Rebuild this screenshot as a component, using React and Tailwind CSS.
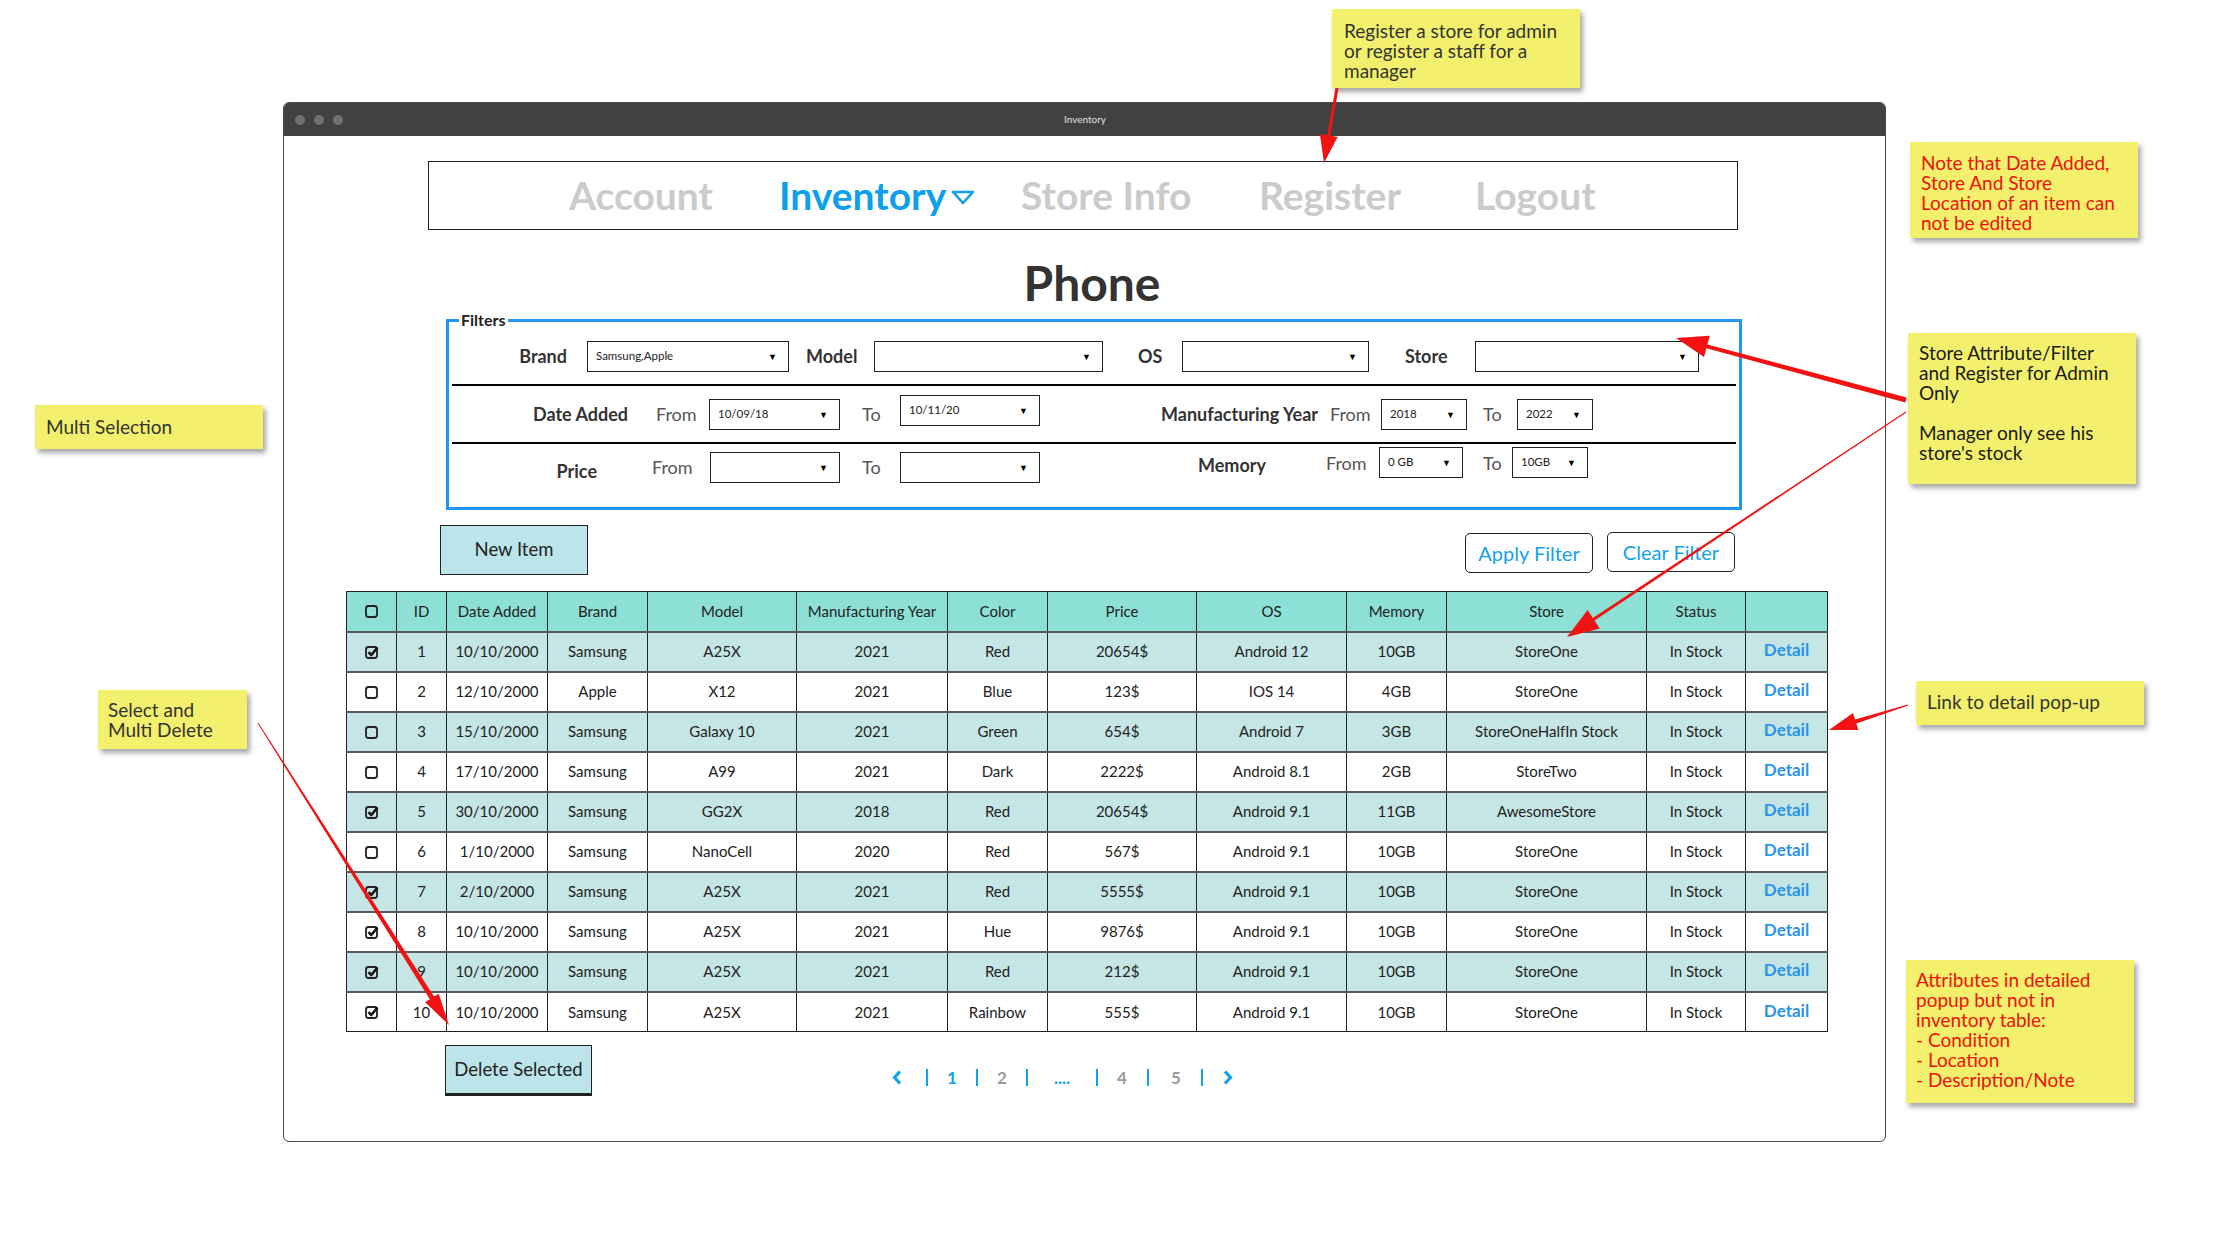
import clsx from 'clsx';

// wireframe data
const rows = [
  { id: 1, date: '10/10/2000', brand: 'Samsung', model: 'A25X', year: '2021', color: 'Red', price: '20654$', os: 'Android 12', mem: '10GB', store: 'StoreOne', checked: true },
  { id: 2, date: '12/10/2000', brand: 'Apple', model: 'X12', year: '2021', color: 'Blue', price: '123$', os: 'IOS 14', mem: '4GB', store: 'StoreOne', checked: false },
  { id: 3, date: '15/10/2000', brand: 'Samsung', model: 'Galaxy 10', year: '2021', color: 'Green', price: '654$', os: 'Android 7', mem: '3GB', store: 'StoreOneHalfIn Stock', checked: false },
  { id: 4, date: '17/10/2000', brand: 'Samsung', model: 'A99', year: '2021', color: 'Dark', price: '2222$', os: 'Android 8.1', mem: '2GB', store: 'StoreTwo', checked: false },
  { id: 5, date: '30/10/2000', brand: 'Samsung', model: 'GG2X', year: '2018', color: 'Red', price: '20654$', os: 'Android 9.1', mem: '11GB', store: 'AwesomeStore', checked: true },
  { id: 6, date: '1/10/2000', brand: 'Samsung', model: 'NanoCell', year: '2020', color: 'Red', price: '567$', os: 'Android 9.1', mem: '10GB', store: 'StoreOne', checked: false },
  { id: 7, date: '2/10/2000', brand: 'Samsung', model: 'A25X', year: '2021', color: 'Red', price: '5555$', os: 'Android 9.1', mem: '10GB', store: 'StoreOne', checked: true },
  { id: 8, date: '10/10/2000', brand: 'Samsung', model: 'A25X', year: '2021', color: 'Hue', price: '9876$', os: 'Android 9.1', mem: '10GB', store: 'StoreOne', checked: true },
  { id: 9, date: '10/10/2000', brand: 'Samsung', model: 'A25X', year: '2021', color: 'Red', price: '212$', os: 'Android 9.1', mem: '10GB', store: 'StoreOne', checked: true },
  { id: 10, date: '10/10/2000', brand: 'Samsung', model: 'A25X', year: '2021', color: 'Rainbow', price: '555$', os: 'Android 9.1', mem: '10GB', store: 'StoreOne', checked: true },
];

const headers = ['ID', 'Date Added', 'Brand', 'Model', 'Manufacturing Year', 'Color', 'Price', 'OS', 'Memory', 'Store', 'Status', ''];
const colWidths = ['w-[50px]', 'w-[50px]', 'w-[101px]', 'w-[100px]', 'w-[149px]', 'w-[151px]', 'w-[100px]', 'w-[149px]', 'w-[150px]', 'w-[100px]', 'w-[200px]', 'w-[99px]', 'w-[82px]'];

const Check = ({ on }) => (
  <svg width="16" height="16" viewBox="0 0 16 16" className="mx-auto block">
    <rect x="2" y="3" width="11" height="11" rx="2.5" fill="none" stroke="#222" strokeWidth="1.8" />
    {on && <path d="M4.5 8.2 L7.3 11 L13.5 3.5" fill="none" stroke="#111" strokeWidth="2.6" strokeLinejoin="round" />}
  </svg>
);

const Select = ({ className, value }) => (
  <div className={clsx('flex h-[31px] items-center justify-between border-[1.5px] border-[#222] bg-white pl-[8px] pr-[11px]', className)}>
    <span className="text-[11.5px] text-[#222]">{value}</span>
    <span className="text-[9px] leading-none text-black">▼</span>
  </div>
);

const Note = ({ className, children }) => (
  <div className={clsx('absolute bg-[#F2F06C] text-[19px] leading-[20px] shadow-[3px_4px_5px_rgba(0,0,0,0.35)]', className)}>
    {children}
  </div>
);

// tapered annotation arrow, geometry from endpoints
const arrow = (x1, y1, x2, y2, w1, w2, L, H) => {
  const dx = x2 - x1, dy = y2 - y1;
  const len = Math.hypot(dx, dy);
  const ux = dx / len, uy = dy / len, nx = -uy, ny = ux;
  const bx = x2 - ux * L, by = y2 - uy * L;
  const p = [
    [x1 + nx * w1 / 2, y1 + ny * w1 / 2],
    [bx + nx * w2 / 2, by + ny * w2 / 2],
    [bx + nx * H, by + ny * H],
    [x2, y2],
    [bx - nx * H, by - ny * H],
    [bx - nx * w2 / 2, by - ny * w2 / 2],
    [x1 - nx * w1 / 2, y1 - ny * w1 / 2],
  ];
  return p.map(([a, b]) => `${a.toFixed(1)},${b.toFixed(1)}`).join(' ');
};

const Chevron = ({ left }) => (
  <svg width="10" height="15" viewBox="0 0 10 15">
    <path d={left ? 'M8 1.5 L2.5 7.5 L8 13.5' : 'M2 1.5 L7.5 7.5 L2 13.5'} fill="none" stroke="#10A2EC" strokeWidth="3.2" />
  </svg>
);

const Bar = ({ className }) => (
  <div className={clsx('flex justify-center', className)}>
    <div className="h-[17px] w-[2px] bg-[#10A2EC]" />
  </div>
);

export default function App() {
  return (
    <div className="relative h-[1252px] w-[2219px] overflow-hidden bg-white pl-[283px] pt-[102px] font-[Lato,sans-serif] text-[#222]">
      {/* browser window */}
      <div className="flex h-[1040px] w-[1603px] flex-col overflow-hidden rounded-[6px] border-[1.5px] border-[#4a4a4a] bg-white">
        <div className="relative flex h-[33px] shrink-0 items-center bg-[#414141] pl-[11px]">
          <div className="flex gap-[9px]">
            <span className="h-[10px] w-[10px] rounded-full bg-[#6f6f6f]" />
            <span className="h-[10px] w-[10px] rounded-full bg-[#6f6f6f]" />
            <span className="h-[10px] w-[10px] rounded-full bg-[#6f6f6f]" />
          </div>
          <span className="flex-1 pr-[58px] text-center text-[10px] text-[#e0e0e0]">Inventory</span>
        </div>

        {/* nav */}
        <div className="ml-[144px] mt-[25px] flex h-[69px] w-[1310px] items-center border-[1.5px] border-[#222] pl-[140px] text-[39px] font-bold">
          <span className="w-[210px] text-[#CBCBCB]">Account</span>
          <span className="flex w-[242px] items-center text-[#0EA0EA]">
            Inventory
            <svg width="24" height="16" viewBox="0 0 24 16" className="ml-[5px] mt-[4px]">
              <path d="M2 2 L22 2 L12 13 Z" fill="none" stroke="#0EA0EA" strokeWidth="2.6" strokeLinejoin="round" />
            </svg>
          </span>
          <span className="w-[238px] text-[#CBCBCB]">Store Info</span>
          <span className="w-[216px] text-[#CBCBCB]">Register</span>
          <span className="text-[#CBCBCB]">Logout</span>
        </div>

        <h1 className="mt-[25px] h-[56px] pl-[15px] text-center text-[48px] font-bold leading-[56px] text-[#333]">Phone</h1>

        {/* filters */}
        <fieldset className="ml-[162px] mt-[1px] w-[1296px] border-[3px] border-[#2196F3] pb-[17px] text-[18px]">
          <legend className="ml-[10px] px-[2px] text-[16px] font-bold leading-[16px] text-[#222]">Filters</legend>
          <div className="flex h-[56px] items-center">
            <span className="w-[118px] text-right font-bold text-[#333]">Brand</span>
            <Select className="ml-[20px] w-[202px]" value="Samsung,Apple" />
            <span className="w-[85px] pl-[17px] font-bold text-[#333]">Model</span>
            <Select className="w-[229px]" />
            <span className="w-[79px] pl-[35px] font-bold text-[#333]">OS</span>
            <Select className="w-[187px]" />
            <span className="w-[106px] pl-[36px] font-bold text-[#333]">Store</span>
            <Select className="w-[224px]" />
          </div>
          <div className="mx-[3px] h-[2px] bg-black" />
          <div className="flex h-[56px] items-center">
            <span className="w-[179px] text-right font-bold text-[#333]">Date Added</span>
            <span className="w-[81px] pl-[28px] text-[#555]">From</span>
            <Select className="w-[131px]" value="10/09/18" />
            <span className="w-[60px] pl-[22px] text-[#555]">To</span>
            <Select className="-mt-[8px] w-[140px]" value="10/11/20" />
            <span className="w-[278px] text-right font-bold text-[#333]">Manufacturing Year</span>
            <span className="w-[63px] pl-[12px] text-[#555]">From</span>
            <Select className="w-[86px]" value="2018" />
            <span className="w-[50px] pl-[16px] text-[#555]">To</span>
            <Select className="w-[76px]" value="2022" />
          </div>
          <div className="mx-[3px] h-[2px] bg-black" />
          <div className="flex h-[46px] items-center">
            <span className="mt-[8px] w-[148px] text-right font-bold text-[#333]">Price</span>
            <span className="w-[113px] pl-[55px] text-[#555]">From</span>
            <Select className="w-[130px]" />
            <span className="w-[60px] pl-[22px] text-[#555]">To</span>
            <Select className="w-[140px]" />
            <span className="-mt-[4px] w-[226px] text-right font-bold text-[#333]">Memory</span>
            <span className="-mt-[8px] w-[113px] pl-[60px] text-[#555]">From</span>
            <Select className="-mt-[10px] w-[84px]" value="0 GB" />
            <span className="-mt-[8px] w-[49px] pl-[20px] text-[#555]">To</span>
            <Select className="-mt-[10px] w-[76px]" value="10GB" />
          </div>
        </fieldset>

        {/* actions */}
        <div className="mt-[15px] flex h-[50px] items-start">
          <button className="ml-[156px] h-[50px] w-[148px] border-[1.5px] border-[#222] bg-[#BCE5EB] text-[18.5px] text-[#222]">New Item</button>
          <button className="ml-auto mt-[8px] h-[40px] w-[128px] rounded-[5px] border-[1.5px] border-[#222] text-[20px] text-[#13A3EA]">Apply Filter</button>
          <button className="ml-[14px] mr-[150px] mt-[7px] h-[40px] w-[128px] rounded-[5px] border-[1.5px] border-[#222] text-[20px] text-[#13A3EA]">Clear Filter</button>
        </div>

        {/* inventory table */}
        <table className="ml-[62px] mt-[16px] w-[1481px] table-fixed border-collapse border-[1.5px] border-[#222] text-center text-[15px] text-[#222]">
          <colgroup>
            {colWidths.map((w, i) => <col key={i} className={w} />)}
          </colgroup>
          <thead>
            <tr className="bg-[#8CE0D6]">
              <th className="h-[40px] border border-[#222] font-normal"><Check /></th>
              {headers.map((h, i) => (
                <th key={i} className="h-[40px] border border-[#222] font-normal">{h}</th>
              ))}
            </tr>
          </thead>
          <tbody>
            {rows.map((r, i) => (
              <tr key={r.id} className={clsx('border-t-2 border-[#5a5a5a]', i % 2 === 0 ? 'bg-[#C6E5E5]' : 'bg-white')}>
                <td className="h-[40px] border-x border-[#222]"><Check on={r.checked} /></td>
                <td className="border-x border-[#222]">{r.id}</td>
                <td className="border-x border-[#222]">{r.date}</td>
                <td className="border-x border-[#222]">{r.brand}</td>
                <td className="border-x border-[#222]">{r.model}</td>
                <td className="border-x border-[#222]">{r.year}</td>
                <td className="border-x border-[#222]">{r.color}</td>
                <td className="border-x border-[#222]">{r.price}</td>
                <td className="border-x border-[#222]">{r.os}</td>
                <td className="border-x border-[#222]">{r.mem}</td>
                <td className="border-x border-[#222]">{r.store}</td>
                <td className="border-x border-[#222]">In Stock</td>
                <td className="border-x border-[#222] pb-[3px] text-[17px] font-bold text-[#2B93E8]">Detail</td>
              </tr>
            ))}
          </tbody>
        </table>

        {/* bottom row */}
        <div className="mt-[13px] flex items-center">
          <button className="ml-[161px] h-[51px] w-[147px] border-[1.5px] border-b-[3px] border-[#222] bg-[#BCE5EB] text-[18.5px] text-[#222]">Delete Selected</button>
          <div className="ml-[292px] mt-[14px] flex items-center text-[17px] font-bold text-[#9a9a9a]">
            <div className="flex w-[26px] justify-center"><Chevron left /></div>
            <Bar className="w-[34px]" />
            <span className="w-[16px] text-center text-[#10A2EC]">1</span>
            <Bar className="w-[34px]" />
            <span className="w-[16px] text-center">2</span>
            <Bar className="w-[34px]" />
            <span className="w-[36px] text-center text-[#10A2EC]">....</span>
            <Bar className="w-[34px]" />
            <span className="w-[16px] text-center">4</span>
            <Bar className="w-[36px]" />
            <span className="w-[20px] text-center">5</span>
            <Bar className="w-[32px]" />
            <div className="flex w-[20px] justify-center"><Chevron /></div>
          </div>
        </div>
      </div>

      {/* sticky notes */}
      <Note className="left-[1332px] top-[9px] h-[79px] w-[248px] pl-[12px] pt-[12px] text-[#333]">
        Register a store for admin<br />or register a staff for a<br />manager
      </Note>
      <Note className="left-[35px] top-[405px] h-[44px] w-[228px] pl-[11px] pt-[12px] text-[#333]">Multi Selection</Note>
      <Note className="left-[98px] top-[690px] h-[59px] w-[149px] pl-[10px] pt-[10px] text-[#333]">
        Select and<br />Multi Delete
      </Note>
      <Note className="left-[1910px] top-[142px] h-[96px] w-[228px] pl-[11px] pt-[11px] text-[#F01010]">
        Note that Date Added,<br />Store And Store<br />Location of an item can<br />not be edited
      </Note>
      <Note className="left-[1908px] top-[333px] h-[151px] w-[228px] pl-[11px] pt-[10px] text-[#1a1a1a]">
        Store Attribute/Filter<br />and Register for Admin<br />Only<br /><br />Manager only see his<br />store's stock
      </Note>
      <Note className="left-[1916px] top-[681px] h-[44px] w-[228px] pl-[11px] pt-[11px] text-[#333]">Link to detail pop-up</Note>
      <Note className="left-[1906px] top-[960px] h-[143px] w-[228px] pl-[10px] pt-[10px] text-[#F01010]">
        Attributes in detailed<br />popup but not in<br />inventory table:<br />- Condition<br />- Location<br />- Description/Note
      </Note>

      {/* annotation arrows */}
      <svg className="pointer-events-none absolute left-0 top-0" width="2219" height="1252">
        <g fill="#F21212">
          <polygon points={arrow(1337, 88, 1324, 163, 3, 3, 28, 9)} />
          <polygon points={arrow(1906, 400, 1676, 338, 5, 4, 32, 11)} />
          <polygon points={arrow(1906, 412, 1567, 637, 1, 3, 32, 11)} />
          <polygon points={arrow(1908, 705, 1829, 730, 1, 4, 28, 9)} />
          <polygon points={arrow(258, 723, 449, 1025, 1, 5, 32, 8)} />
        </g>
      </svg>
    </div>
  );
}
